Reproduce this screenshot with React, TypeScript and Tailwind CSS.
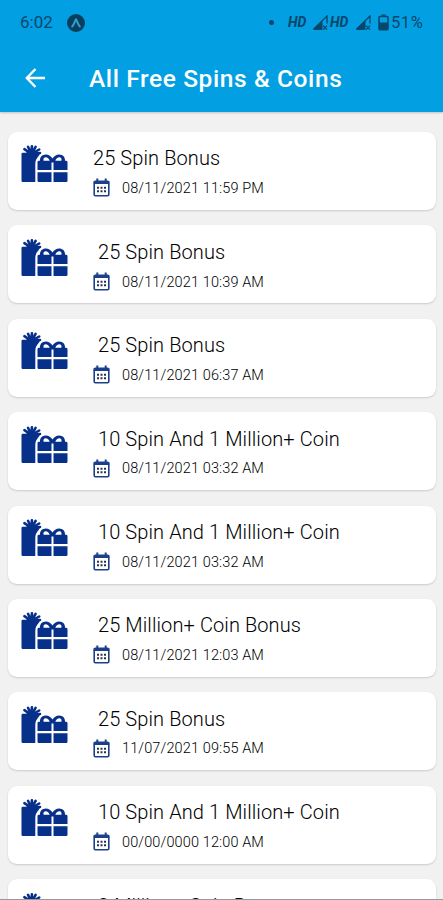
import React from 'react';

interface Reward {
  title: string;
  date: string;
}

const rewards: Reward[] = [
  { title: '25 Spin Bonus', date: '08/11/2021 11:59 PM' },
  { title: ' 25 Spin Bonus', date: '08/11/2021 10:39 AM' },
  { title: ' 25 Spin Bonus', date: '08/11/2021 06:37 AM' },
  { title: ' 10 Spin And 1 Million+ Coin', date: '08/11/2021 03:32 AM' },
  { title: ' 10 Spin And 1 Million+ Coin', date: '08/11/2021 03:32 AM' },
  { title: ' 25 Million+ Coin Bonus', date: '08/11/2021 12:03 AM' },
  { title: ' 25 Spin Bonus', date: '11/07/2021 09:55 AM' },
  { title: ' 10 Spin And 1 Million+ Coin', date: '00/00/0000 12:00 AM' },
  { title: ' 2 Million+ Coin Bonus', date: '00/00/0000 12:00 AM' },
];

function GiftIcon() {
  return (
    <svg width="47" height="38" viewBox="0 0 47 38" fill="#06308a" className="shrink-0">
      {/* Tall bag with ruffled paper on top */}
      <path d="M0.5 9 Q0.5 7.8 1.7 7.8 H18.5 Q19.5 9 17.8 10.8 Q14.3 14.5 14.3 19 V37 H1.7 Q0.5 37 0.5 35.8 Z" />
      <path d="M5 8 L10.5 3.6 L16.5 8 Z" />
      <path d="M10.5 9 L3.4 4.2 M10.5 9 L7 1.8 M10.5 9 L10.9 1.4 M10.5 9 L14.6 1.8 M10.5 9 L18.2 4.5 M10.5 9 L19 8" stroke="#06308a" strokeWidth="2.6" strokeLinecap="round" />
      {/* Gift box split by the ribbon */}
      <path d="M16.5 25 V17.2 Q16.5 15.8 18 15.8 H19 C18.6 12.2 21.2 9.4 24.8 9.4 C27.8 9.4 30.1 11 31.5 13.6 C32.9 11 35.2 9.4 38.2 9.4 C41.8 9.4 44.4 12.2 44 15.8 H45 Q46.5 15.8 46.5 17.2 V25 H32.5 V17.5 H30.5 V25 Z" />
      <path d="M22.6 15.8 H28.7 C27.9 13.7 26.4 12.3 24.8 12.3 C22.9 12.3 22 14 22.6 15.8 Z M34.3 15.8 H40.4 C41 14 40.1 12.3 38.2 12.3 C36.6 12.3 35.1 13.7 34.3 15.8 Z" fill="#fff" />
      <path d="M16.5 27.3 H30.5 V37 H17.8 Q16.5 37 16.5 35.7 Z M32.5 27.3 H46.5 V35.7 Q46.5 37 45.2 37 H32.5 Z" />
    </svg>
  );
}

function CalendarIcon() {
  return (
    <svg width="17" height="19" viewBox="0 0 17 19" fill="none" className="shrink-0">
      <rect x="1.2" y="3.2" width="14.6" height="14.6" rx="1.2" stroke="#1c3f8c" strokeWidth="1.6" />
      <path d="M0.8 3 H16.2 V6 H0.8 Z" fill="#1c3f8c" />
      <path d="M4.3 0.4 V4 M12.7 0.4 V4" stroke="#1c3f8c" strokeWidth="2" />
      <path d="M4 9.8 H6 M7.5 9.8 H9.5 M11 9.8 H13 M4 13.3 H6 M7.5 13.3 H9.5 M11 13.3 H13" stroke="#29334f" strokeWidth="2" />
    </svg>
  );
}

function SignalIcon() {
  return (
    <svg width="16" height="16" viewBox="0 0 16 16" fill="none" className="shrink-0">
      <path d="M1.5 14.3 L15 1 V8.5 M1.5 14.3 H9.5" stroke="#07476b" strokeWidth="1.3" />
      <path d="M1 14.8 L10.5 5.5 V14.8 Z" fill="#07476b" />
      <path d="M11.2 10.6 L15 14.6 M15 10.6 L11.2 14.6" stroke="#07476b" strokeWidth="1.3" />
    </svg>
  );
}

function BatteryIcon() {
  return (
    <svg width="11" height="17" viewBox="0 0 11 17" fill="none" className="shrink-0">
      <path d="M3.5 0.5 H7.5 V2.5 H3.5 Z" fill="#07476b" />
      <rect x="1" y="2.5" width="9" height="13.3" rx="1" stroke="#07476b" strokeWidth="1.5" />
      <path d="M1 8.5 H10 V15.5 H1 Z" fill="#07476b" />
    </svg>
  );
}

function StatusBar() {
  return (
    <div className="flex h-[45px] items-center pl-[20px] pr-[19px] text-[#07476b]">
      <span className="w-[47px] pt-[1px] text-[17px]">6:02</span>
      <svg width="18" height="18" viewBox="0 0 18 18" fill="none" className="shrink-0">
        <circle cx="9" cy="9" r="9" fill="#07405f" />
        <path d="M5.2 12.5 C7 10.5 7.8 7.5 9 5.2 C10.2 7.5 11 10.5 12.8 12.5" stroke="#359bc8" strokeWidth="2" strokeLinecap="round" strokeLinejoin="round" />
      </svg>
      <span className="ml-[184px] size-[5px] shrink-0 rounded-full bg-[#07476b]" />
      <span className="ml-[14px] w-[24px] text-[14px] font-bold italic">HD</span>
      <SignalIcon />
      <span className="ml-[2px] w-[25px] text-[14px] font-bold italic">HD</span>
      <SignalIcon />
      <span className="ml-[7px]"><BatteryIcon /></span>
      <span className="ml-[2px] pt-[2px] text-[16.5px] tracking-[0.6px]">51%</span>
    </div>
  );
}

function RewardCard({ reward }: { reward: Reward }) {
  return (
    <div className="flex h-[78px] shrink-0 rounded-[9px] bg-white pl-[13px] pt-[13.4px] shadow-[0_1px_2px_rgba(0,0,0,0.16)]">
      <GiftIcon />
      <div className="ml-[25px]">
        <div className="-mt-[1px] h-[28px] whitespace-pre text-[20px] font-light leading-[28px] tracking-[0.1px] text-black">{reward.title}</div>
        <div className="mt-[4.6px] flex h-[22px] items-center">
          <CalendarIcon />
          <span className="ml-[12px] pt-[2px] text-[14.5px] font-light tracking-[0.12px] text-black">{reward.date}</span>
        </div>
      </div>
    </div>
  );
}

export default function App() {
  return (
    <div className="flex h-[900px] w-[443px] flex-col overflow-hidden border-b border-[#999] bg-[#f1f1f1] font-['Roboto',sans-serif]">
      <header className="z-10 h-[112px] shrink-0 bg-[#029fe3] shadow-[0_1px_2px_rgba(0,0,0,0.2)]">
        <StatusBar />
        <div className="flex h-[67px] items-center pl-[25px]">
          <svg width="21" height="20" viewBox="0 0 21 20" fill="none" stroke="#fff" strokeWidth="2.4" className="-mt-[2px]">
            <path d="M10.5 1 L1.8 10 L10.5 19 M2 10 H20" />
          </svg>
          <h1 className="ml-[43px] pt-[1px] text-[24.5px] font-medium tracking-[0.6px] text-white">All Free Spins &amp; Coins</h1>
        </div>
      </header>
      <main className="flex flex-col gap-[15.4px] pl-[8px] pr-[7px] pt-[20px]">
        {rewards.map((reward, index) => (
          <RewardCard key={index} reward={reward} />
        ))}
      </main>
    </div>
  );
}
